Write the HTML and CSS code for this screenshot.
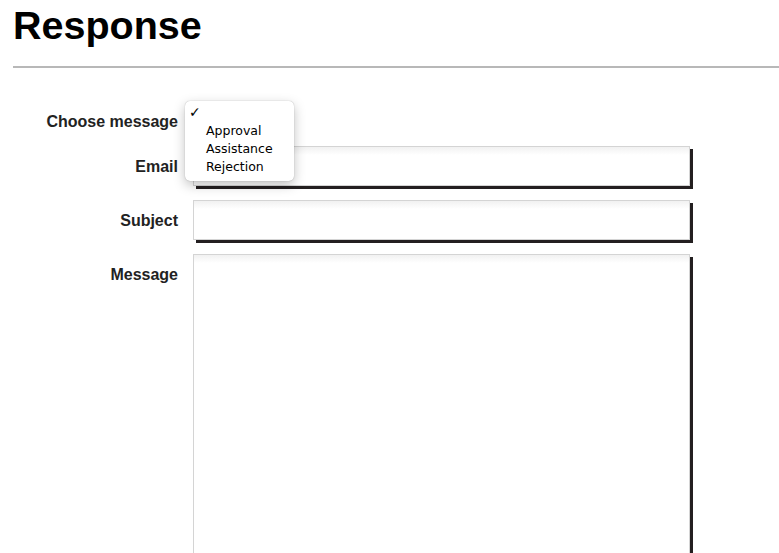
FILE: index.html
```html
<!DOCTYPE html>
<html>
<head>
<meta charset="utf-8">
<link rel="stylesheet" href="styles.css">
</head>
<body>
<div class="page">
  <h1 class="title">Response</h1>
  <hr class="rule">
  <form class="form">
    <label class="label">Choose message</label>
    <div class="select-wrap">
      <div class="select-box"></div>
      <ul class="menu">
        <li class="menu-item selected"><span class="check">✓</span></li>
        <li class="menu-item">Approval</li>
        <li class="menu-item">Assistance</li>
        <li class="menu-item">Rejection</li>
      </ul>
    </div>
    <label class="label">Email</label>
    <input class="field" type="text">
    <label class="label">Subject</label>
    <input class="field" type="text">
    <label class="label">Message</label>
    <textarea class="field area"></textarea>
  </form>
</div>
</body>
</html>
```

FILE: styles.css
```css
html, body {
  margin: 0;
  padding: 0;
  background: #ffffff;
  overflow: hidden;
}
.page {
  padding-left: 13px;
  font-family: "Liberation Sans", Arial, sans-serif;
}
.title {
  margin: 3px 0 0 0;
  font-size: 39.5px;
  font-weight: bold;
  color: #000;
  line-height: normal;
}
.rule {
  margin: 18px 0 0 0;
  border: 0;
  height: 2px;
  background: #b8b8b8;
}
.form {
  display: grid;
  grid-template-columns: 165px 497px;
  column-gap: 15px;
  row-gap: 14px;
  margin-top: 33px;
  align-items: start;
}
.label {
  font-size: 16px;
  font-weight: bold;
  color: #222;
  text-align: right;
  padding-top: 12px;
  line-height: normal;
}
.select-wrap {
  position: relative;
  height: 31px;
}
.select-box {
  height: 31px;
}
.menu {
  position: absolute;
  left: -8px;
  top: 0;
  width: 109px;
  margin: 0;
  padding: 3px 0 5px 0;
  list-style: none;
  background: #fff;
  border-radius: 5px;
  box-shadow: 0 0 1px rgba(0,0,0,0.35), 0 4px 12px rgba(0,0,0,0.25);
  font-family: "DejaVu Sans", "Lucida Grande", sans-serif;
  font-size: 12.5px;
  color: #000;
  z-index: 2;
}
.menu-item {
  height: 18px;
  line-height: 18px;
  padding-left: 21px;
  position: relative;
}
.check {
  position: absolute;
  left: 4px;
  top: -1px;
  font-size: 14px;
  font-weight: bold;
}
.field {
  box-sizing: border-box;
  width: 497px;
  height: 40px;
  margin: 0;
  border: 1px solid #d4d4d4;
  background: linear-gradient(#f1f1f1, #ffffff 8px);
  box-shadow: 3px 3px 0 #231f20;
  outline: none;
  font-family: "Liberation Sans", Arial, sans-serif;
  font-size: 14px;
  padding: 6px;
}
.area {
  height: 330px;
  resize: none;
  display: block;
}
```
